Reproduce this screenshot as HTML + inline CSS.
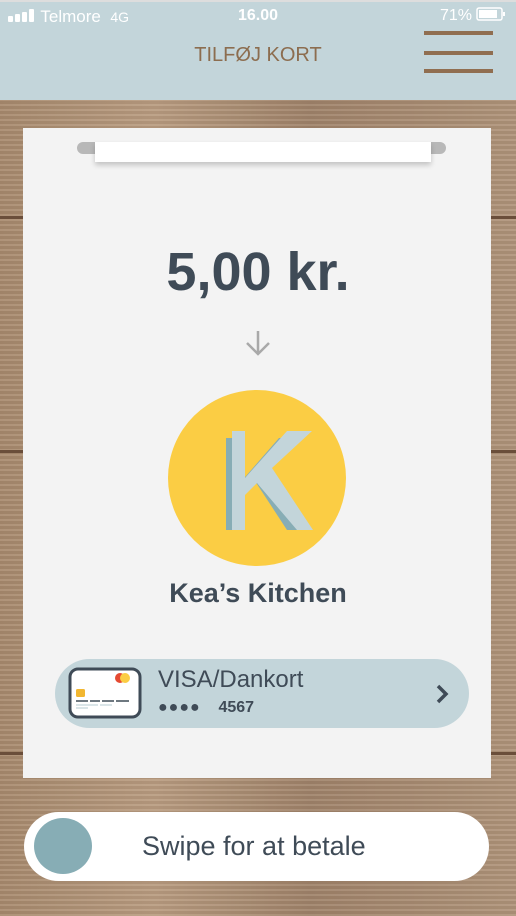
<!DOCTYPE html>
<html><head><meta charset="utf-8"><style>
*{margin:0;padding:0;box-sizing:border-box}
body{width:516px;height:916px;overflow:hidden;position:relative;font-family:"Liberation Sans",sans-serif;
background:
linear-gradient(#6a4e3a,#6a4e3a) 0 216px/100% 3px no-repeat,
linear-gradient(#6a4e3a,#6a4e3a) 0 450px/100% 3px no-repeat,
linear-gradient(#6a4e3a,#6a4e3a) 0 752px/100% 3px no-repeat,
repeating-linear-gradient(0deg,rgba(255,255,255,.08) 0 2px,rgba(0,0,0,.05) 2px 5px),
linear-gradient(90deg,#a88a6e,#b99c80 30%,#a0836a 60%,#b0947a);}
.top{position:absolute;left:0;top:0;width:516px;height:100px;background:#c3d5da;border-top:2px solid #ddd}
.sb{position:absolute;top:5px;font-size:17px;color:#fff}
.title{position:absolute;top:42px;left:0;width:516px;text-align:center;font-size:20px;color:#8c6d4f}
.bar{position:absolute;left:424px;width:69px;height:4px;background:#906e50}
.card{position:absolute;left:23px;top:128px;width:468px;height:650px;background:#f3f3f3}
.slot{position:absolute;left:77px;top:142px;width:369px;height:12px;border-radius:6px;background:#b8b8b8}
.paper{position:absolute;left:95px;top:142px;width:336px;height:20px;background:#fff;box-shadow:0 3px 5px rgba(0,0,0,.2)}
.amt{position:absolute;top:241px;left:0;width:516px;text-align:center;font-size:54px;font-weight:bold;color:#3f4b57}
.kc{position:absolute;left:168px;top:390px;width:178px;height:176px;border-radius:50%;background:#fbcd44}
.name{position:absolute;top:578px;left:0;width:516px;text-align:center;font-size:27px;font-weight:bold;color:#3f4b57}
.pay{position:absolute;left:55px;top:659px;width:414px;height:69px;border-radius:35px;background:#c3d5da}
.swipe{position:absolute;left:24px;top:812px;width:465px;height:69px;border-radius:35px;background:#fff}
</style></head><body>
<div class="top">
<div class="sb" style="left:8px"><span style="display:inline-block;vertical-align:-1px">
<svg width="28" height="14"><rect x="0" y="7" width="5" height="6" rx="1" fill="#fff"/><rect x="7" y="5" width="5" height="8" rx="1" fill="#fff"/><rect x="14" y="3" width="5" height="10" rx="1" fill="#fff"/><rect x="21" y="0" width="5" height="13" rx="1" fill="#fff"/></svg></span> Telmore&nbsp; <span style="font-size:14px">4G</span></div>
<div class="sb" style="left:238px;font-weight:bold;font-size:16px">16.00</div>
<div class="sb" style="left:440px;font-size:16px">71% <svg width="30" height="14" style="vertical-align:-1px"><rect x="1" y="1" width="25" height="12" rx="2" fill="none" stroke="#fff" stroke-width="1.5"/><rect x="3" y="3" width="18" height="8" fill="#fff"/><rect x="27" y="5" width="2" height="4" fill="#fff"/></svg></div>
<div class="title">TILFØJ KORT</div>
<div class="bar" style="top:29px"></div><div class="bar" style="top:49px"></div><div class="bar" style="top:67px"></div>
</div>
<div class="card"></div>
<div class="slot"></div><div class="paper"></div>
<div class="amt">5,00 kr.</div>
<svg style="position:absolute;left:243px;top:328px" width="30" height="30"><path d="M15 3V26M4 15L15 26L26 15" fill="none" stroke="#a9a9a9" stroke-width="2.5"/></svg>
<div class="kc"></div>
<svg style="position:absolute;left:0;top:0" width="516" height="916">
<polygon points="226,438 239,438 239,530 226,530" fill="#87adb5"/>
<polygon points="239,484 279,438 296,438 239,500" fill="#87adb5"/>
<polygon points="255,481 267,476 299,530 287,530" fill="#87adb5"/>
<polygon points="232,431 245,431 245,530 232,530" fill="#c3d5da"/>
<polygon points="245,478 287,431 312,431 272,468 313,530 297,530 257,483 245,495" fill="#c3d5da"/>
</svg>
<div class="name">Kea’s Kitchen</div>
<div class="pay">
<svg style="position:absolute;left:13px;top:8px" width="74" height="52"><rect x="2" y="2" width="70" height="48" rx="8" fill="#fff" stroke="#3f4b57" stroke-width="3"/><rect x="8" y="22" width="9" height="8" rx="1.5" fill="#f2b731"/><circle cx="52" cy="11" r="5" fill="#e54a32"/><circle cx="57" cy="11" r="5" fill="#fbcd44"/><path d="M8 34h12M22 34h10M34 34h12M48 34h13" stroke="#3f4b57" stroke-width="1.5"/><path d="M8 38h22M32 38h12M8 41h12" stroke="#c3d5da" stroke-width="1.2"/></svg>
<div style="position:absolute;left:103px;top:7px;font-size:24px;color:#3f4b57">VISA/Dankort</div>
<div style="position:absolute;left:103px;top:40px;font-size:16px;font-weight:bold;color:#3f4b57"><span style="letter-spacing:1px">●●●●</span>&nbsp;&nbsp;&nbsp;&nbsp;4567</div>
<svg style="position:absolute;left:380px;top:24px" width="16" height="22"><path d="M3 3L11 11L3 19" fill="none" stroke="#3f4b57" stroke-width="3.5"/></svg>
</div>
<div class="swipe">
<div style="position:absolute;left:10px;top:6px;width:58px;height:56px;border-radius:50%;background:#87adb5"></div>
<div style="position:absolute;left:118px;top:19px;font-size:27px;color:#3f4b57">Swipe for at betale</div>
</div>
</body></html>
